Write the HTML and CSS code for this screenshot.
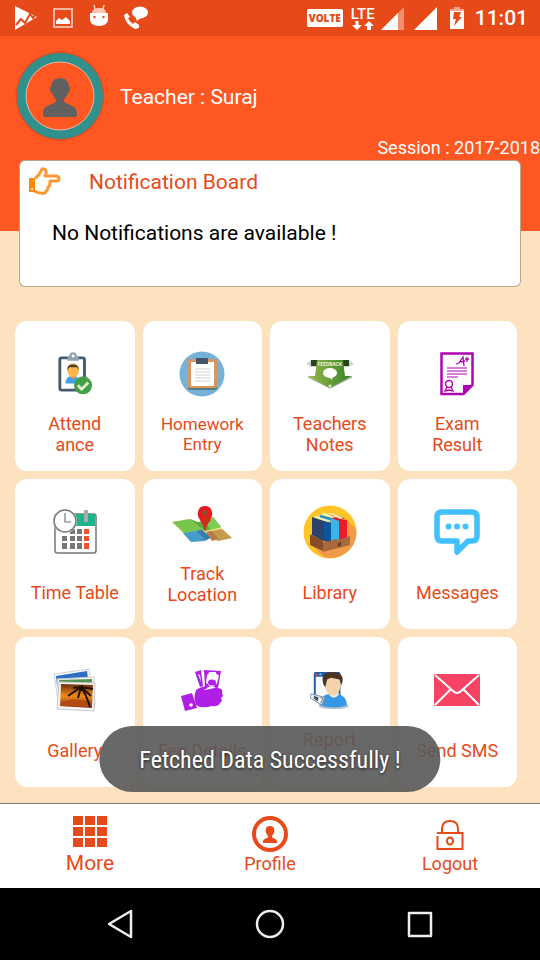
FILE: index.html
```
<!DOCTYPE html>
<html lang="en">
<head>
    <meta charset="UTF-8">
    <meta name="viewport" content="width=device-width, initial-scale=1">
    <title>Teacher Dashboard</title>
    <link rel="stylesheet" href="styles.css">
</head>
<body>
<div class="statusbar">
    <svg class="st-play" width="24" height="26" viewBox="0 0 24 26"><path d="M1 1l22 11L1 25z" fill="#fff"/><path d="M2 20l5-6 4 4 5-9 3 4 2-3" fill="none" stroke="#e64a19" stroke-width="2"/></svg>
    <svg class="st-img" width="20" height="20" viewBox="0 0 20 20"><path d="M1 1h18v18H1z" fill="none" stroke="#fbd5c8" stroke-width="1.6"/><path d="M3 16v-3l3-3 3 2 4-3 4 4v3z" fill="#fff"/></svg>
    <svg class="st-droid" width="20" height="22" viewBox="0 0 20 22"><path d="M5 0l1 4M15 0l-1 4" stroke="#fbd5c8" stroke-width="1.4"/><path d="M3 8q0-5 7-5t7 5z" fill="#fbc4b2"/><path d="M1 8h18v6q0 7-9 7t-9-7z" fill="#fff"/><circle cx="5.500" cy="12" r="1.200" fill="#e64a19"/><circle cx="14.500" cy="12" r="1.200" fill="#e64a19"/></svg>
    <svg class="st-call" width="26" height="24" viewBox="0 0 26 24"><path d="M4 7L1 9q1 9 11 14l4-1v-3l-4-3-2 2q-4-3-5-6l2-1z" fill="#fff"/><ellipse cx="17" cy="6.500" rx="8" ry="6" fill="#fff"/><path d="M12 10l2 5 5-4z" fill="#fff"/></svg>
    <span class="volte">VOLTE</span>
    <span class="lte">
        <span>LTE</span>
        <svg width="22" height="9" viewBox="0 0 22 9"><path d="M3.500 0h3v4H10L5 9 0 4h3.500zM15 9h4V5h3l-5-5-5 5h3z" fill="#fff"/></svg>
    </span>
    <svg class="st-sig1" width="23" height="23" viewBox="0 0 23 23"><path d="M23 0v23H0z" fill="#f09070"/><path d="M17 6v17H0z" fill="#fff"/></svg>
    <svg class="st-sig2" width="23" height="23" viewBox="0 0 23 23"><path d="M23 0v23H0z" fill="#fff"/></svg>
    <svg class="st-bat" width="14" height="22" viewBox="0 0 14 22"><path d="M4 0h6v2h4v3H0V2h4z" fill="#f4a78f"/><path d="M0 4h14v18H0z" fill="#fff"/><path d="M4 5h7l-2 5h3l-8 9 2-7H3z" fill="#e64a19"/></svg>
    <span class="clock">11:01</span>
</div>

<div class="header">
    <div class="user">
        <svg width="90" height="90" viewBox="0 0 90 90">
            <circle cx="45" cy="45" r="44.500" fill="#e04e24"/>
            <circle cx="45" cy="45" r="38.500" fill="#ff5722" stroke="#30918c" stroke-width="9"/>
            <circle cx="45" cy="45" r="34" fill="none" stroke="#e9b8a6" stroke-width="1"/>
            <path d="M45 27c6 0 9 4 9 9 2 0 1 5-1 6-1 4-4 5-4 8 1 4 13 3 13 12v2q0 2-2 2H30q-2 0-2-2v-2c0-9 12-8 13-12 0-3-3-4-4-8-2-1-3-6-1-6 0-5 3-9 9-9z" fill="#616161"/>
        </svg>
        <span class="name">Teacher : Suraj</span>
    </div>
    <p class="session">Session : 2017-2018</p>
</div>

<div class="board">
    <div class="board-title">
        <svg width="32" height="28" viewBox="0 0 32 28"><path d="M6 11q4-2 6-7 1-3 3-2 3 1 2 5l-1 2h11q3 0 3 3 0 2-3 2h-6v2q0 3-2 4 0 3-2 4l-1 2q-6 1-11-2" fill="#fff" stroke="#fb9a35" stroke-width="3" stroke-linejoin="round"/><path d="M0 11h6v14H0z" fill="#fb8c00"/><circle cx="3" cy="22" r="1" fill="#fff"/></svg>
        <h1>Notification Board</h1>
    </div>
    <p>No Notifications are available !</p>
</div>

<div class="grid">
    <button class="tile">
        <span class="icon"><svg width="36" height="46" viewBox="0 0 38 46">
            <rect x="3" y="6" width="26" height="34" rx="2" fill="#fff" stroke="#455a70" stroke-width="3"/>
            <path d="M11 9V6q0-2 2-2 0-4 4-4t4 4q2 0 2 2v3z" fill="#90a4ae"/><circle cx="17" cy="4" r="1.500" fill="#fff"/>
            <path d="M9 33q0-7 6-8h3q6 1 6 8z" fill="#42a0f4"/>
            <path d="M11 18q0-6 6-6t6 6v3q-2 6-6 6t-6-6z" fill="#ffb74d"/><path d="M11 19q-1-6 6-6 6 0 6 6l-2-3h-8z" fill="#4e3a31"/><path d="M15 26h4l-2 3z" fill="#f59b22"/>
            <circle cx="27.500" cy="35" r="9.500" fill="#43a047"/><path d="M22 35l4 4 7-7" fill="none" stroke="#dcedc8" stroke-width="3"/>
        </svg></span>
        <span class="label">Attend<br>ance</span>
    </button>
    <button class="tile small">
        <span class="icon"><svg width="46" height="46" viewBox="0 0 46 46">
            <circle cx="23" cy="23" r="22.500" fill="#76b2d8"/>
            <rect x="9" y="9" width="29" height="30" rx="2" fill="#547f86"/><rect x="9" y="8" width="29" height="29" rx="2" fill="#df945b"/>
            <path d="M12 11h23v24H12z" fill="#fff"/><path d="M17 7h12v6H17z" fill="#435568"/>
            <path d="M16 18h15M16 21h15M16 24h15M16 27h15M16 30h15" stroke="#cfd4cf" stroke-width="1.200"/>
        </svg></span>
        <span class="label">Homework<br>Entry</span>
    </button>
    <button class="tile">
        <span class="icon"><svg width="48" height="32" viewBox="0 0 48 32">
            <defs><linearGradient id="leaf"><stop offset="0" stop-color="#9ab54a"/><stop offset=".5" stop-color="#659f37"/><stop offset="1" stop-color="#397d2c"/></linearGradient></defs>
            <path d="M0 6l5-4h38l5 4-5 3H5z" fill="#d3d6d0"/><path d="M5 2h38v6H5z" fill="#26451f"/>
            <path d="M11 2h26l2 16h7L24 30 2 18h7z" fill="url(#leaf)"/><path d="M2 19l22 11 22-11" fill="none" stroke="#789c68"/>
            <text x="24" y="8" class="tiny">FEEDBACK</text>
            <ellipse cx="24" cy="15" rx="7" ry="5" fill="#fff"/><path d="M22 18l4 4 1-5z" fill="#fff"/><circle cx="24" cy="28" r="1.500" fill="#dfe8c7"/>
        </svg></span>
        <span class="label">Teachers<br>Notes</span>
    </button>
    <button class="tile">
        <span class="icon"><svg width="34" height="44" viewBox="0 0 34 44">
            <path d="M1.500 1.500h31V33l-9 9h-22z" fill="#fff" stroke="#b006b0" stroke-width="2.500"/><path d="M23 43V33h10z" fill="#b006b0"/>
            <path d="M7 16h20M7 19h20M7 22h20M7 25h11" stroke="#b006b0" stroke-width="1.200"/>
            <path d="M16 12l3-1 4-6 1 9M19 10l6-1M25 7h4M27 5v5" fill="none" stroke="#b006b0" stroke-width="1.300"/>
            <circle cx="9" cy="32" r="3.500" fill="none" stroke="#b006b0" stroke-width="1.500"/><path d="M7 35l-2 4 4-1M11 35l2 4-4-1" fill="none" stroke="#b006b0" stroke-width="1.300"/>
        </svg></span>
        <span class="label">Exam<br>Result</span>
    </button>

    <button class="tile">
        <span class="icon"><svg width="44" height="46" viewBox="0 0 44 46">
            <rect x="2" y="5" width="41" height="39" rx="2.500" fill="#fff" stroke="#777" stroke-width="1.500"/><path d="M20 5h22v12H20z" fill="#1db38b"/><path d="M31 1h4v12h-4z" fill="#aaa"/>
            <path d="M17 20h5v5h-5zm7 0h5v5h-5zM9 27h5v5H9zm8 0h5v5h-5zm7 0h5v5h-5zM9 34h5v6H9zm8 0h5v6h-5zm7 0h5v6h-5z" fill="#777"/>
            <path d="M31 20h5v5h-5zm0 7h5v5h-5zm0 7h5v6h-5z" fill="#ee5425"/>
            <circle cx="12" cy="12" r="12" fill="#fff"/><circle cx="12" cy="12" r="11" fill="#fff" stroke="#777" stroke-width="1.500"/><path d="M12 4v9h6" fill="none" stroke="#777" stroke-width="1.200"/>
        </svg></span>
        <span class="label">Time Table</span>
    </button>
    <button class="tile raised">
        <span class="icon"><svg width="60" height="38" viewBox="0 0 60 38">
            <path d="M0 17l18-3 8 4 15-3 19 18-14 3-13-4-14 5z" fill="#f1df8d"/>
            <path d="M0 17l18-3 16 11-22 3-5-5z" fill="#7ac64d"/><path d="M18 14l8 3 7-1 8-4 8 10-16 4z" fill="#64ab43"/><path d="M34 16l7-4 8 10-11 3z" fill="#7fce54"/>
            <path d="M11 28l19-3 9 7-6 4-14 1z" fill="#459ccb"/><path d="M24 26l6-1 9 8-5 2z" fill="#347fa8"/>
            <path d="M34 27l16-3 10 9-14 3z" fill="#c79b4d"/><path d="M34 27l6-1 7 8-7 2z" fill="#b87a4c"/>
            <path d="M33 26q-1-6-5-11-3-4-2-8 1-6 7-6t7 6q1 4-2 8-4 5-5 11z" fill="#e51b20"/><path d="M33 26q-1-6-5-11l5-4 6 4q-5 5-6 11z" fill="#d32d17"/><circle cx="33" cy="8" r="3" fill="#99482b"/>
        </svg></span>
        <span class="label">Track<br>Location</span>
    </button>
    <button class="tile">
        <span class="icon"><svg width="54" height="54" viewBox="0 0 54 54">
            <circle cx="27" cy="27" r="26.500" fill="#ffc527"/><path d="M43 14l10 10q2 12-7 21-12 11-25 7L8 39z" fill="#ef9b48"/>
            <path d="M9 12l9 3 10 3v20l-10-3-9-5z" fill="#2a426c"/><path d="M21 16l8 2v18l-8-1z" fill="#0b559c"/><path d="M17 10l11 3 8-2v24l-8 2V17l-11-4z" fill="#38b5e9"/><path d="M36 14l8 1v20h-8z" fill="#ed1c27"/><path d="M28 8l14 5-6 3-8-3z" fill="#d71f2a"/>
            <path d="M10 12l4-1 14 5-3 1zM17 9l4-1 12 4-4 1zM25 8h4l12 5-4 1z" fill="#f1f0b7"/><path d="M17 11l11 3" stroke="#2b89c0" stroke-width="2"/>
            <path d="M7 29l13 7v10L7 40z" fill="#8a4d27"/><path d="M20 37l8-1 4-2 4 1 11-4v9l-27 7z" fill="#a8693d"/><path d="M35 38l3-1v4l-3 1z" fill="#694126"/>
        </svg></span>
        <span class="label">Library</span>
    </button>
    <button class="tile">
        <span class="icon"><svg width="46" height="46" viewBox="0 0 46 46">
            <path d="M8 3h30q5 0 5 5v19q0 5-5 5h-4L23 43V32H8q-5 0-5-5V8q0-5 5-5z" fill="#fff" stroke="#41c0ff" stroke-width="5.500" stroke-linejoin="round"/>
            <circle cx="14.500" cy="17.500" r="3" fill="#41c0ff"/><circle cx="23" cy="17.500" r="3" fill="#41c0ff"/><circle cx="31.500" cy="17.500" r="3" fill="#41c0ff"/>
        </svg></span>
        <span class="label">Messages</span>
    </button>

    <button class="tile">
        <span class="icon"><svg width="44" height="44" viewBox="0 0 44 44">
            <defs><linearGradient id="dusk" x2="0" y2="1"><stop offset="0" stop-color="#6b2c10"/><stop offset=".5" stop-color="#f48b18"/><stop offset="1" stop-color="#792a0c"/></linearGradient></defs>
            <path d="M1 6l35-5 3 24-34 8z" fill="#f8fafb" stroke="#cdd3d6"/><path d="M3 8l31-5 1 7L4 18z" fill="#2c6fc4"/>
            <path d="M4 11l37-2 1 30-35-2z" fill="#f5f7f6" stroke="#cad0cd"/><path d="M6 12l33-1v7L7 20z" fill="#549356"/>
            <path d="M6 14l36 1-1 28-37-2z" fill="#f5f5f3" stroke="#c8c8c8"/><path d="M8 16l32 1-1 23-32-2z" fill="url(#dusk)"/>
            <path d="M8 34q14-5 31 0v5L7 38z" fill="#b24a12"/>
            <path d="M28 19q5 7 9 20M28 19l-13 9M28 19l-8 1M28 19l12 2M28 19l-3 11M28 19l10 9M29 17v6" fill="none" stroke="#21120b" stroke-width="2"/>
        </svg></span>
        <span class="label">Gallery</span>
    </button>
    <button class="tile">
        <span class="icon"><svg width="44" height="44" viewBox="0 0 44 44">
            <path d="M1 28l11-3 5 15-12 3z" fill="#b01fe5"/><circle cx="11" cy="37" r="1.800" fill="#fff"/>
            <path d="M16 22q9-6 12-2l-5 2q10-1 13-3l5 2q2 1 1 4l1 3-2 2 1 3-2 2q-2 4-8 3-7 2-12 1l-4-2q-3-7 0-15z" fill="#b01fe5"/>
            <path d="M15 4l6-2 2 16-3 1z" fill="#b01fe5"/><path d="M18 6l2 1 1 7z" fill="#fff"/>
            <path d="M24 2l17 1-3 17-6-2-7 2z" fill="#b01fe5"/><path d="M29 4h7q0 3 3 3l-2 9q-2-1-3 2h-5q0-2-3-3l1-8q2-1 2-3z" fill="#fff"/><ellipse cx="32" cy="14.500" rx="4" ry="3" fill="#b01fe5"/>
        </svg></span>
        <span class="label">Fee Details</span>
    </button>
    <button class="tile">
        <span class="icon"><svg width="40" height="38" viewBox="0 0 42 40">
            <ellipse cx="25" cy="37" rx="16" ry="3" fill="#b7c2cc"/><rect x="4" y="1" width="28" height="30" rx="2" fill="#2059a8"/><path d="M6 6h22v23H6z" fill="#f6faff"/><circle cx="7" cy="4" r="1.500" fill="#e64a19"/><circle cx="11" cy="3.500" r="1.300" fill="#70a8e8"/>
            <path d="M10 36q0-11 12-12h7q9 2 10 12-13 5-29 0z" fill="#3598e5"/><path d="M19 23h12q-2 5-6 5t-6-5z" fill="#f5eee8"/>
            <path d="M16 7h16v10q-2 9-8 9t-8-9z" fill="#f6d2ac"/><path d="M14 14q-4-13 10-13 14 1 9 14l-2-6-9-2-4 2-2 8z" fill="#4d3423"/>
            <path d="M1 24l15 4-4 8-12-8z" fill="#f1f4f7" stroke="#7b8994"/><path d="M4 26l5 2-1 4-4-3z" fill="#41525f"/><path d="M11 28l3 1-3 5" fill="none" stroke="#536879"/>
        </svg></span>
        <span class="label">Report<br>&nbsp;</span>
    </button>
    <button class="tile">
        <span class="icon"><svg width="46" height="32" viewBox="0 0 46 32">
            <rect width="46" height="32" rx="1" fill="#f84364"/><path d="M1 1l18 16q4 4 8 0L45 1M1 31l16-16M45 31L29 15" fill="none" stroke="#fff" stroke-width="2"/>
        </svg></span>
        <span class="label">Send SMS</span>
    </button>
</div>

<div class="tabs">
    <button class="tab big">
        <svg width="34" height="32" viewBox="0 0 34 32"><path d="M0 0h10v9H0zm12 0h10v9H12zm12 0h10v9H24zM0 11h10v9H0zm12 0h10v9H12zm12 0h10v9H24zM0 22h10v9H0zm12 0h10v9H12zm12 0h10v9H24z" fill="#e64a19"/></svg>
        <span>More</span>
    </button>
    <button class="tab">
        <svg width="36" height="38" viewBox="0 0 36 38"><circle cx="18" cy="19" r="16" fill="none" stroke="#e64a19" stroke-width="4"/><path d="M18 11c4 0 5 3 4 7-1 2-2 2-2 4 1 2 5 1 5 5v1H11v-1c0-4 4-3 5-5 0-2-1-2-2-4-1-4 0-7 4-7z" fill="#e64a19"/></svg>
        <span>Profile</span>
    </button>
    <button class="tab">
        <svg width="28" height="38" viewBox="0 0 28 38"><path d="M1.500 21v13h25V18H1M6 18v-4q0-8 8-8t8 8v4" fill="none" stroke="#e64a19" stroke-width="2"/><ellipse cx="14" cy="26" rx="3" ry="3.500" fill="none" stroke="#e64a19" stroke-width="2"/></svg>
        <span>Logout</span>
    </button>
</div>

<div class="navbar">
    <button aria-label="Back"><svg width="30" height="30" viewBox="0 0 30 30"><path d="M26 2v26L4 15z"/></svg></button>
    <button aria-label="Home"><svg width="30" height="30" viewBox="0 0 30 30"><circle cx="15" cy="15" r="13"/></svg></button>
    <button aria-label="Recent apps"><svg width="30" height="30" viewBox="0 0 30 30"><rect x="4" y="4" width="22" height="23"/></svg></button>
</div>

<div class="toast">Fetched Data Successfully !</div>
</body>
</html>
```
FILE: styles.css
```
body,p,h1{margin: 0;padding: 0;}
body{
    position: relative;
    display: flex;flex-direction: column;
    min-height: 100vh;
    background: #fce2be;
    font-family: Roboto, "Liberation Sans", sans-serif;
}
svg{display: block;flex: none;}
button{border: 0;padding: 0;background: none;font-family: inherit;cursor: pointer;}

/* status bar */
.statusbar{
    display: flex;align-items: center;
    height: 36px;padding: 0 12px 0 14px;
    background: #e64a19;color: #fff;
}
.st-img{margin-left: 15px;}
.st-droid{margin-left: 16px;margin-bottom: 4px;}
.st-call{margin-left: 14px;}
.volte{
    margin-left: auto;padding: 0 2px;
    border-radius: 2px;background: #fff;color: #e64a19;
    font-size: 10px;font-weight: 900;line-height: 18px;
}
.volte{font-family: "Open Sans", Roboto, sans-serif;font-weight: 800;}
.lte{display: flex;flex-direction: column;align-items: center;margin-left: 8px;font-size: 15px;font-weight: 500;line-height: 14px;}
.st-sig1{margin-left: 6px;}
.st-sig2{margin-left: 10px;}
.st-bat{margin-left: 13px;}
.clock{margin-left: 11px;font-size: 21px;font-weight: 500;}

/* header */
.header{height: 195px;background: #ff5722;color: #fff;}
.user{display: flex;align-items: center;padding: 15px 15px 0;}
.name{margin: 2px 0 0 15px;font-size: 21px;}
.session{margin-top: -4px;text-align: right;font-size: 18px;line-height: 21px;}

.board{
    box-sizing: border-box;
    min-height: 127px;
    margin: -71px 19px 0;padding: 6px 9px;
    border: 1px solid rgba(120,80,30,.5);border-radius: 6px;
    background: #fff;
}
.board-title{display: flex;align-items: center;}
.board-title svg{margin-bottom: 2px;}
.board h1{margin-left: 28px;color: #e64a19;font-size: 21px;font-weight: normal;line-height: 28px;}
.board p{margin: 22px 23px 0;font-size: 21px;line-height: 28px;}

/* menu */
.grid{
    display: grid;grid-template-columns: repeat(4, 1fr);
    gap: 8px;
    padding: 34px 23px 16px 15px;
}
.tile{
    display: flex;flex-direction: column;align-items: center;justify-content: center;
    box-sizing: border-box;
    height: 150px;padding-top: 2px;
    border-radius: 12px;background: #fff;
    color: #e64a19;
}
.raised{padding: 0 0 14px;}
.icon{display: flex;align-items: center;justify-content: center;height: 70px;margin-bottom: 4px;}
.label{
    display: flex;align-items: center;
    height: 42px;
    font-size: 18px;line-height: 21px;
}
.small .label{font-size: 17px;line-height: 20px;}
.tiny{font-size: 5px;font-weight: bold;text-anchor: middle;fill: #e8f0d8;}

/* bottom tabs */
.tabs{
    display: flex;
    box-sizing: border-box;
    height: 85px;margin-top: auto;
    border-top: 1px solid #777;background: #fff;
}
.tab{
    flex: 1;
    display: flex;flex-direction: column;align-items: center;
    padding-top: 11px;
    color: #e64a19;font-size: 18px;line-height: 22px;
}
.big{padding-top: 12px;font-size: 21px;line-height: 30px;}

.navbar{display: flex;justify-content: center;gap: 120px;height: 72px;background: #000;}
.navbar svg{fill: none;stroke: #eee;stroke-width: 2.5;stroke-linejoin: round;}

.toast{
    position: absolute;left: 50%;bottom: 168px;
    transform: translateX(-50%);
    box-sizing: border-box;
    padding: 3px 40px 0;
    border-radius: 33px;background: rgba(89,89,89,.91);
    color: #fff;
    font-family: "Roboto Condensed", Roboto, sans-serif;
    font-size: 24px;line-height: 63px;white-space: nowrap;
    text-shadow: 0 1px 3px rgba(0,0,0,.7);
}
```
